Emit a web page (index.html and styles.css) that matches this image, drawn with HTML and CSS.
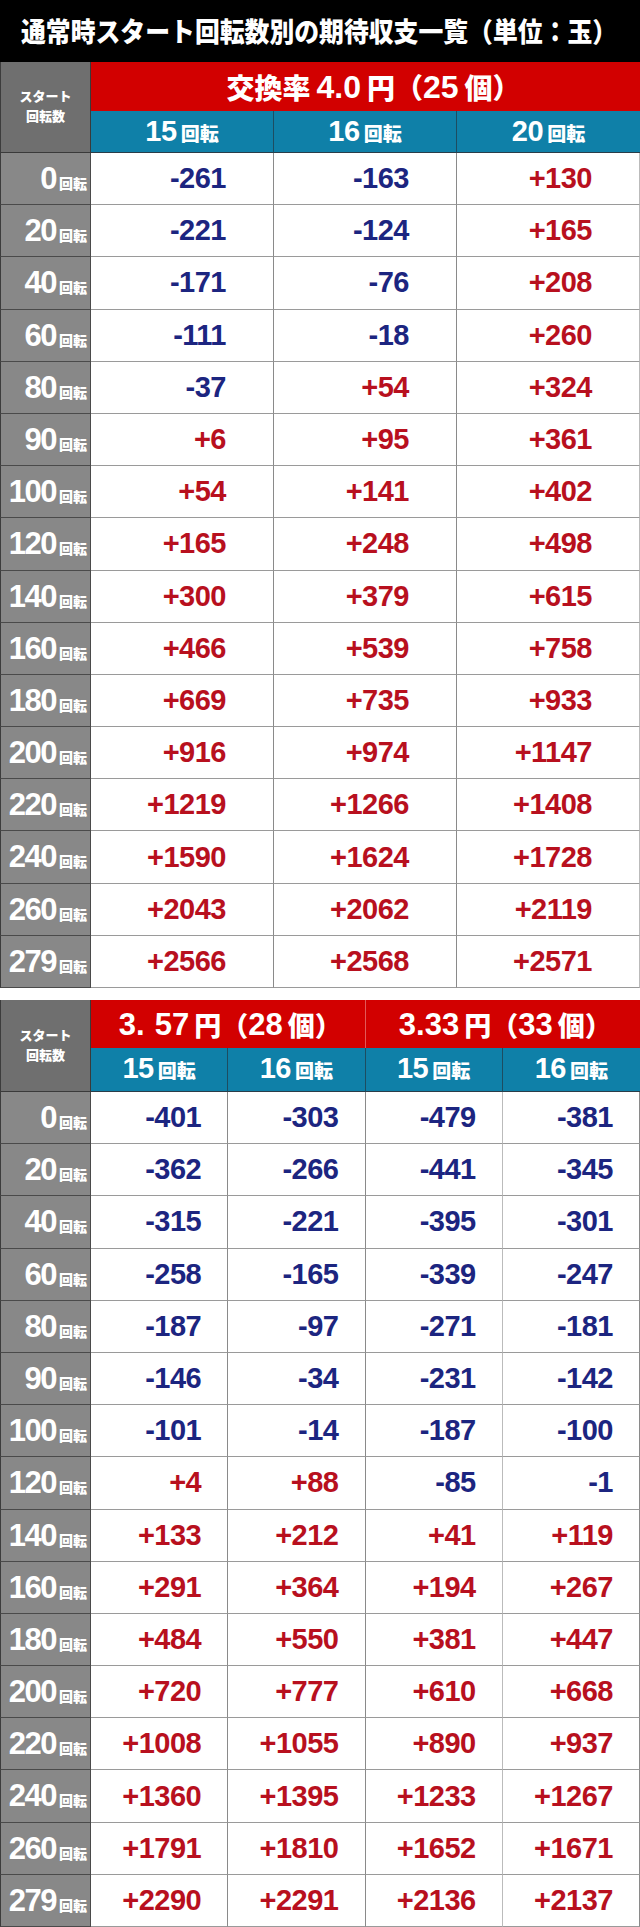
FILE: index.html
```html
<!DOCTYPE html>
<html lang="ja">
<head>
<meta charset="utf-8">
<title>通常時スタート回転数別の期待収支一覧</title>
<link rel="stylesheet" href="styles.css">
</head>
<body>
<div class="page">
  <h1 class="title"><span class="title-text">通常時スタート回転数別の期待収支一覧（単位：玉）</span></h1>

  <div class="table t3">
    <div class="corner">スタート<br>回転数</div>
    <div class="rate span3"><span class="jp">交換率</span><span class="n">4.0</span><span class="jp">円（</span><span class="n tight">25</span><span class="jp">個）</span></div>
    <div class="sub"><span class="n">15</span><span class="u">回転</span></div>
    <div class="sub"><span class="n">16</span><span class="u">回転</span></div>
    <div class="sub last"><span class="n">20</span><span class="u">回転</span></div>

    <div class="lbl"><span class="n">0</span><span class="u">回転</span></div><div class="v neg">-261</div><div class="v neg">-163</div><div class="v pos">+130</div>
    <div class="lbl"><span class="n">20</span><span class="u">回転</span></div><div class="v neg">-221</div><div class="v neg">-124</div><div class="v pos">+165</div>
    <div class="lbl"><span class="n">40</span><span class="u">回転</span></div><div class="v neg">-171</div><div class="v neg">-76</div><div class="v pos">+208</div>
    <div class="lbl"><span class="n">60</span><span class="u">回転</span></div><div class="v neg">-111</div><div class="v neg">-18</div><div class="v pos">+260</div>
    <div class="lbl"><span class="n">80</span><span class="u">回転</span></div><div class="v neg">-37</div><div class="v pos">+54</div><div class="v pos">+324</div>
    <div class="lbl"><span class="n">90</span><span class="u">回転</span></div><div class="v pos">+6</div><div class="v pos">+95</div><div class="v pos">+361</div>
    <div class="lbl"><span class="n">100</span><span class="u">回転</span></div><div class="v pos">+54</div><div class="v pos">+141</div><div class="v pos">+402</div>
    <div class="lbl"><span class="n">120</span><span class="u">回転</span></div><div class="v pos">+165</div><div class="v pos">+248</div><div class="v pos">+498</div>
    <div class="lbl"><span class="n">140</span><span class="u">回転</span></div><div class="v pos">+300</div><div class="v pos">+379</div><div class="v pos">+615</div>
    <div class="lbl"><span class="n">160</span><span class="u">回転</span></div><div class="v pos">+466</div><div class="v pos">+539</div><div class="v pos">+758</div>
    <div class="lbl"><span class="n">180</span><span class="u">回転</span></div><div class="v pos">+669</div><div class="v pos">+735</div><div class="v pos">+933</div>
    <div class="lbl"><span class="n">200</span><span class="u">回転</span></div><div class="v pos">+916</div><div class="v pos">+974</div><div class="v pos">+1147</div>
    <div class="lbl"><span class="n">220</span><span class="u">回転</span></div><div class="v pos">+1219</div><div class="v pos">+1266</div><div class="v pos">+1408</div>
    <div class="lbl"><span class="n">240</span><span class="u">回転</span></div><div class="v pos">+1590</div><div class="v pos">+1624</div><div class="v pos">+1728</div>
    <div class="lbl"><span class="n">260</span><span class="u">回転</span></div><div class="v pos">+2043</div><div class="v pos">+2062</div><div class="v pos">+2119</div>
    <div class="lbl"><span class="n">279</span><span class="u">回転</span></div><div class="v pos">+2566</div><div class="v pos">+2568</div><div class="v pos">+2571</div>
  </div>

  <div class="table t4">
    <div class="corner">スタート<br>回転数</div>
    <div class="rate span2"><span class="n">3.</span><span class="n gap">57</span><span class="jp">円（</span><span class="n tight">28</span><span class="jp">個）</span></div>
    <div class="rate span2 last"><span class="n">3.33</span><span class="jp">円（</span><span class="n tight">33</span><span class="jp">個）</span></div>
    <div class="sub"><span class="n">15</span><span class="u">回転</span></div>
    <div class="sub"><span class="n">16</span><span class="u">回転</span></div>
    <div class="sub"><span class="n">15</span><span class="u">回転</span></div>
    <div class="sub last"><span class="n">16</span><span class="u">回転</span></div>

    <div class="lbl"><span class="n">0</span><span class="u">回転</span></div><div class="v neg">-401</div><div class="v neg">-303</div><div class="v neg">-479</div><div class="v neg">-381</div>
    <div class="lbl"><span class="n">20</span><span class="u">回転</span></div><div class="v neg">-362</div><div class="v neg">-266</div><div class="v neg">-441</div><div class="v neg">-345</div>
    <div class="lbl"><span class="n">40</span><span class="u">回転</span></div><div class="v neg">-315</div><div class="v neg">-221</div><div class="v neg">-395</div><div class="v neg">-301</div>
    <div class="lbl"><span class="n">60</span><span class="u">回転</span></div><div class="v neg">-258</div><div class="v neg">-165</div><div class="v neg">-339</div><div class="v neg">-247</div>
    <div class="lbl"><span class="n">80</span><span class="u">回転</span></div><div class="v neg">-187</div><div class="v neg">-97</div><div class="v neg">-271</div><div class="v neg">-181</div>
    <div class="lbl"><span class="n">90</span><span class="u">回転</span></div><div class="v neg">-146</div><div class="v neg">-34</div><div class="v neg">-231</div><div class="v neg">-142</div>
    <div class="lbl"><span class="n">100</span><span class="u">回転</span></div><div class="v neg">-101</div><div class="v neg">-14</div><div class="v neg">-187</div><div class="v neg">-100</div>
    <div class="lbl"><span class="n">120</span><span class="u">回転</span></div><div class="v pos">+4</div><div class="v pos">+88</div><div class="v neg">-85</div><div class="v neg">-1</div>
    <div class="lbl"><span class="n">140</span><span class="u">回転</span></div><div class="v pos">+133</div><div class="v pos">+212</div><div class="v pos">+41</div><div class="v pos">+119</div>
    <div class="lbl"><span class="n">160</span><span class="u">回転</span></div><div class="v pos">+291</div><div class="v pos">+364</div><div class="v pos">+194</div><div class="v pos">+267</div>
    <div class="lbl"><span class="n">180</span><span class="u">回転</span></div><div class="v pos">+484</div><div class="v pos">+550</div><div class="v pos">+381</div><div class="v pos">+447</div>
    <div class="lbl"><span class="n">200</span><span class="u">回転</span></div><div class="v pos">+720</div><div class="v pos">+777</div><div class="v pos">+610</div><div class="v pos">+668</div>
    <div class="lbl"><span class="n">220</span><span class="u">回転</span></div><div class="v pos">+1008</div><div class="v pos">+1055</div><div class="v pos">+890</div><div class="v pos">+937</div>
    <div class="lbl"><span class="n">240</span><span class="u">回転</span></div><div class="v pos">+1360</div><div class="v pos">+1395</div><div class="v pos">+1233</div><div class="v pos">+1267</div>
    <div class="lbl"><span class="n">260</span><span class="u">回転</span></div><div class="v pos">+1791</div><div class="v pos">+1810</div><div class="v pos">+1652</div><div class="v pos">+1671</div>
    <div class="lbl"><span class="n">279</span><span class="u">回転</span></div><div class="v pos">+2290</div><div class="v pos">+2291</div><div class="v pos">+2136</div><div class="v pos">+2137</div>
  </div>
</div>
</body>
</html>
```

FILE: styles.css
```css
* { box-sizing: border-box; margin: 0; padding: 0; }

body {
  margin: 0;
  background: #fff;
  font-family: "Liberation Sans", "Noto Sans CJK JP", sans-serif;
}

.page {
  width: 640px;
}

.title {
  height: 62px;
  background: #000;
  color: #fff;
  font-family: "Noto Sans CJK JP", sans-serif;
  font-weight: 900;
  font-size: 27px;
  line-height: 62px;
  padding-left: 21px;
  white-space: nowrap;
  overflow: hidden;
}

.title-text {
  display: inline-block;
  transform: scaleX(0.92);
  transform-origin: left center;
}

.table {
  display: grid;
  grid-template-rows: 49px 42px repeat(16, 52.1875px);
}

.t3 {
  grid-template-columns: 91px repeat(3, 1fr);
}

.t4 {
  grid-template-columns: 91px repeat(4, 1fr);
  margin-top: 12px;
  grid-template-rows: 48px 44px repeat(16, 52.1875px);
}

.corner {
  grid-row: 1 / span 2;
  background: #6f6f6f;
  color: #fff;
  font-family: "Noto Sans CJK JP", sans-serif;
  font-weight: 900;
  font-size: 13px;
  line-height: 20px;
  text-align: center;
  display: flex;
  align-items: center;
  justify-content: center;
  border-left: 1px solid #3c3c3c;
  border-right: 1px solid #3a3a3a;
  border-bottom: 1px solid #3a3a3a;
  padding-bottom: 2px;
}

.rate {
  background: #d20000;
  color: #fff;
  display: flex;
  align-items: center;
  justify-content: center;
  font-weight: 700;
  white-space: nowrap;
}

.span3 { grid-column: 2 / span 3; padding-left: 16px; }
.span2 { grid-column: span 2; border-right: 1px solid rgba(255,255,255,0.35); }
.span2.last { border-right: none; }

.rate .jp {
  font-family: "Noto Sans CJK JP", sans-serif;
  font-weight: 900;
  font-size: 28px;
  line-height: 1;
}

.rate .n {
  font-family: "Liberation Sans", sans-serif;
  font-size: 32px;
  line-height: 1;
  margin: 0 6px;
}

.rate .n.tight { margin-left: 0; }
.rate .n.gap { margin-left: 4px; }

.t4 .rate .jp { font-size: 27px; }
.t4 .rate .n { font-size: 31px; margin: 0 5px; }
.t4 .rate .n.tight { margin-left: 0; }

.sub {
  background: #0f80a8;
  color: #fff;
  display: flex;
  align-items: baseline;
  justify-content: center;
  padding-top: 4px;
  border-right: 1px solid #1d4d61;
  border-bottom: 1px solid #2a3d48;
  white-space: nowrap;
}

.sub.last { border-right: none; }

.sub .n {
  font-family: "Liberation Sans", sans-serif;
  font-weight: 700;
  font-size: 29px;
  letter-spacing: -0.5px;
}

.sub .u {
  font-family: "Noto Sans CJK JP", sans-serif;
  font-weight: 900;
  font-size: 19px;
  margin-left: 4px;
}

.lbl {
  background: #888;
  color: #fff;
  display: flex;
  align-items: baseline;
  justify-content: flex-end;
  padding-right: 3px;
  padding-top: 10px;
  border-left: 1px solid #3c3c3c;
  border-right: 1px solid #4a4a4a;
  border-bottom: 1px solid #4a4a4a;
  white-space: nowrap;
}

.lbl .n {
  font-family: "Liberation Sans", sans-serif;
  font-weight: 700;
  font-size: 31px;
  letter-spacing: -1.5px;
  line-height: 1;
}

.lbl .u {
  font-family: "Noto Sans CJK JP", sans-serif;
  font-weight: 900;
  font-size: 14px;
  line-height: 1;
  margin-left: 3px;
}

.v {
  background: #fff;
  display: flex;
  align-items: center;
  justify-content: flex-end;
  font-family: "Liberation Sans", sans-serif;
  font-weight: 700;
  font-size: 29px;
  letter-spacing: -0.5px;
  border-right: 1px solid #8a8a8a;
  border-bottom: 1px solid #9a9a9a;
  white-space: nowrap;
}

.t3 .v { padding-right: 47px; }
.t4 .v { padding-right: 26px; }

.t3 .v:nth-child(4n + 9) { border-right: 1px solid #bbb; }
.t4 .v:nth-child(5n + 11) { border-right: 1px solid #bbb; }

.neg { color: #1c2580; }
.pos { color: #b8101e; }
```
